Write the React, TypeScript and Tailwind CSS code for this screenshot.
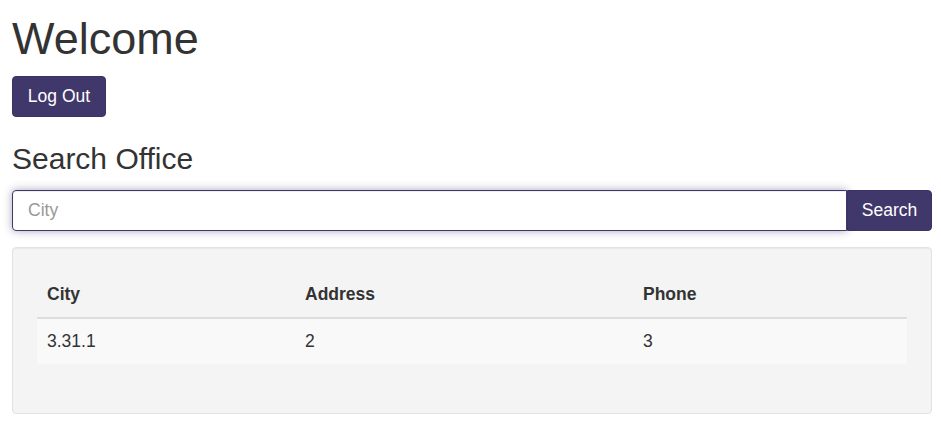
import React from "react";

export default function App() {
  const font = { fontFamily: '"Liberation Sans", Arial, Helvetica, sans-serif' };
  return (
    <div className="min-h-[432px] bg-white text-[#333333] pl-[12px] pr-[9px]" style={font}>
      <h1 className="mt-[14px] text-[45px] leading-[50px] font-normal">Welcome</h1>
      <button className="mt-[12px] h-[41px] w-[94px] rounded-[4px] bg-[#40386b] text-white text-[17.5px] border border-[#3a3363] flex items-center justify-center">
        Log Out
      </button>
      <h3 className="mt-[25px] text-[30px] leading-[33px] font-normal">Search Office</h3>
      <div className="mt-[15px] flex h-[41px]">
        <input
          placeholder="City"
          className="flex-1 h-[41px] px-[15px] text-[17.5px] border border-[#40386b] rounded-l-[4px] outline-none placeholder:text-[#999999] shadow-[inset_0_1px_1px_rgba(0,0,0,0.075),0_0_8px_rgba(64,56,107,0.45)] relative z-10"
        />
        <button className="w-[85px] h-[41px] bg-[#40386b] text-white text-[17.5px] rounded-r-[4px] border border-[#3a3363]">
          Search
        </button>
      </div>
      <div className="mt-[16px] bg-[#f4f4f4] border border-[#e3e3e3] rounded-[4px] p-[24px] shadow-[inset_0_1px_1px_rgba(0,0,0,0.05)]">
        <table className="w-full text-[17.5px] leading-[25px] border-collapse mb-[25px]">
          <thead>
            <tr className="border-b-2 border-[#dddddd]">
              <th className="w-[258px] text-left font-bold p-[10px] h-[45px]">City</th>
              <th className="w-[338px] text-left font-bold p-[10px]">Address</th>
              <th className="text-left font-bold p-[10px]">Phone</th>
            </tr>
          </thead>
          <tbody>
            <tr className="bg-[#f9f9f9]">
              <td className="p-[10px] h-[45px]">3.31.1</td>
              <td className="p-[10px]">2</td>
              <td className="p-[10px]">3</td>
            </tr>
          </tbody>
        </table>
      </div>
    </div>
  );
}
